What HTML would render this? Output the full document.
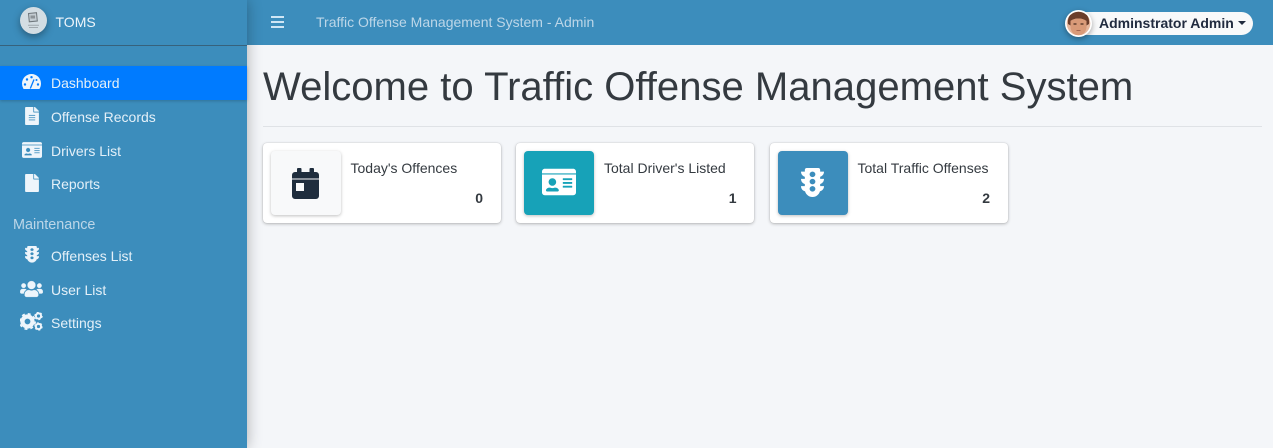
<!DOCTYPE html>
<html lang="en"><head><meta charset="utf-8"><title>TOMS</title>
<style>
*{box-sizing:border-box}
html,body{margin:0;padding:0}
body{width:1273px;height:448px;overflow:hidden;position:relative;background:#f4f6f9;font-family:"Liberation Sans",sans-serif;font-size:14px;color:#343a40}
.a{position:absolute;white-space:nowrap}
#top{left:247px;top:0;width:1026px;height:45px;background:#3c8dbc}
#side{left:0;top:0;width:247px;height:448px;background:#3c8dbc;box-shadow:0 0 14px rgba(0,0,0,.3)}
#line{left:0;top:45px;width:247px;height:1px;background:#37627c}
#active{left:0;top:66px;width:247px;height:34px;background:#007bff;box-shadow:0 1px 3px rgba(0,0,0,.2)}
.nav{left:51px;color:#e4f0f8;line-height:20px;font-size:14px}
.ic{position:absolute;fill:#eef5fb;stroke:#eef5fb;stroke-width:9}
.card{position:absolute;top:143px;width:238px;height:80px;background:#fff;border-radius:4px;box-shadow:0 0 1px rgba(0,0,0,.2),0 1px 3px rgba(0,0,0,.25)}
.box{position:absolute;left:8px;top:8px;width:70px;height:64px;border-radius:4px;box-shadow:0 1px 3px rgba(0,0,0,.25)}
.lbl{position:absolute;left:87.5px;top:15px;line-height:20px;color:#343a40;white-space:nowrap}
.num{position:absolute;right:18px;top:45px;line-height:20px;font-weight:700;color:#343a40}
</style></head><body>
<div class="a" id="top"></div>
<div class="a" id="side"></div>
<div class="a" id="line"></div>

<div class="a" style="left:20px;top:7px;width:27px;height:27px;border-radius:50%;background:#d3dde3;box-shadow:0 3px 8px rgba(0,0,0,.35)"></div>
<svg class="a" style="left:20px;top:7px" width="27" height="27" viewBox="0 0 27 27"><path d="M8.500 6.500l8-.8.800 8.300-8 .8z" fill="#c3ccd2" stroke="#6f777c" stroke-width="1"/><path d="M10.500 8.500h4.500v3h-4.500z" fill="#8b9297"/><path d="M8 17.800h11v1H8zM9 20h9v1H9z" fill="#a0a8ad"/></svg>
<div class="a" style="left:55.500px;top:12px;line-height:20px;color:#eef5fb;font-size:14px">TOMS</div>

<div class="a" id="active"></div>
<svg class="a" style="left:21px;top:73px" width="21" height="17" viewBox="0 0 21 17"><path d="M10.500 1a9.500 9.500 0 0 1 9.500 9.500c0 1.900-.5 3.700-1.400 5.200a.7.700 0 0 1-.6.300H3a.7.700 0 0 1-.6-.3A9.500 9.500 0 0 1 1 10.500 9.500 9.500 0 0 1 10.500 1z" fill="#eef5fb"/><g fill="#007bff"><circle cx="4" cy="11.500" r="1.200"/><circle cx="6" cy="6.500" r="1.200"/><circle cx="10.500" cy="4.200" r="1.200"/><circle cx="17" cy="11.500" r="1.200"/><circle cx="15.500" cy="7" r="1"/></g><path d="M9.300 15.500L13 6.500" stroke="#007bff" stroke-width="1.300" fill="none"/></svg>
<div class="a nav" style="top:73px">Dashboard</div>

<svg class="ic" style="left:24.500px;top:107px" width="14" height="18" viewBox="0 0 384 512"><path d="M224 136V0H24C11 0 0 11 0 24v464c0 13 11 24 24 24h336c13 0 24-11 24-24V160H248c-13 0-24-11-24-24zm64 236c0 7-5 12-12 12H108c-7 0-12-5-12-12v-8c0-7 5-12 12-12h168c7 0 12 5 12 12v8zm0-64c0 7-5 12-12 12H108c-7 0-12-5-12-12v-8c0-7 5-12 12-12h168c7 0 12 5 12 12v8zm0-72v8c0 7-5 12-12 12H108c-7 0-12-5-12-12v-8c0-7 5-12 12-12h168c7 0 12 5 12 12zm96-114v6H256V0h6c6 0 12 3 17 7l98 98c4 4 7 10 7 17z"/></svg>
<div class="a nav" style="top:107px">Offense Records</div>

<svg class="ic" style="left:21.500px;top:141px" width="20" height="18" viewBox="0 0 576 512"><path d="M528 32H48C21 32 0 53 0 80v16h576V80c0-27-21-48-48-48zM0 432c0 27 21 48 48 48h480c27 0 48-21 48-48V128H0v304zm352-232c0-4 4-8 8-8h144c4 0 8 4 8 8v16c0 4-4 8-8 8H360c-4 0-8-4-8-8v-16zm0 64c0-4 4-8 8-8h144c4 0 8 4 8 8v16c0 4-4 8-8 8H360c-4 0-8-4-8-8v-16zm0 64c0-4 4-8 8-8h144c4 0 8 4 8 8v16c0 4-4 8-8 8H360c-4 0-8-4-8-8v-16zM176 192c35 0 64 29 64 64s-29 64-64 64-64-29-64-64 29-64 64-64zM67 392c8-26 33-40 61-40h8c15 6 28 8 40 8s25-2 40-8h8c28 0 53 14 61 40 3 10-5 24-16 24H83c-11 0-19-14-16-24z"/></svg>
<div class="a nav" style="top:141px">Drivers List</div>

<svg class="ic" style="left:24.500px;top:174px" width="14" height="18" viewBox="0 0 384 512"><path d="M224 136V0H24C11 0 0 11 0 24v464c0 13 11 24 24 24h336c13 0 24-11 24-24V160H248c-13 0-24-11-24-24zm160-14v6H256V0h6c6 0 12 3 17 7l98 98c4 4 7 10 7 17z"/></svg>
<div class="a nav" style="top:174px">Reports</div>

<div class="a" style="left:13px;top:215px;line-height:20px;color:#bcd6e8;font-size:14.400px">Maintenance</div>

<svg class="ic" style="left:24.500px;top:246px" width="14" height="16.500" viewBox="0 0 384 512" preserveAspectRatio="none"><path d="M384 192h-64v-37c38-13 64-45 64-91h-64V32c0-18-14-32-32-32H96C78 0 64 14 64 32v32H0c0 46 26 78 64 91v37H0c0 46 26 78 64 91v37H0c0 47 28 80 68 92 14 56 65 100 124 100s110-44 124-100c40-12 68-45 68-92h-64v-37c38-13 64-45 64-91zM192 416c-26 0-48-22-48-48s22-48 48-48 48 22 48 48-22 48-48 48zm0-128c-26 0-48-22-48-48s22-48 48-48 48 22 48 48-22 48-48 48zm0-128c-26 0-48-22-48-48s22-48 48-48 48 22 48 48-22 48-48 48z"/></svg>
<div class="a nav" style="top:246px">Offenses List</div>

<svg class="ic" style="left:20px;top:280px" width="23" height="18" viewBox="0 0 640 512"><path d="M96 224c35 0 64-29 64-64s-29-64-64-64-64 29-64 64 29 64 64 64zm448 0c35 0 64-29 64-64s-29-64-64-64-64 29-64 64 29 64 64 64zm32 32h-64c-18 0-34 7-45 19 40 22 69 62 75 109h66c18 0 32-14 32-32v-32c0-35-29-64-64-64zm-256 0c62 0 112-50 112-112S382 32 320 32 208 82 208 144s50 112 112 112zm77 32h-8c-21 10-44 16-69 16s-48-6-69-16h-8c-64 0-115 52-115 115v29c0 26 22 48 48 48h288c26 0 48-22 48-48v-29c0-63-51-115-115-115zm-224-13c-11-12-27-19-45-19H64c-35 0-64 29-64 64v32c0 18 14 32 32 32h66c6-47 35-87 75-109z"/></svg>
<div class="a nav" style="top:280px">User List</div>

<svg class="a" style="left:20px;top:312px" width="23" height="19" viewBox="0 0 23 19" fill="none" stroke="#eef5fb"><circle cx="7.500" cy="9.500" r="5" stroke-width="4.200"/><circle cx="7.500" cy="9.500" r="7.700" stroke-width="1.600" stroke-dasharray="3 3.050"/><circle cx="18.500" cy="4" r="2.600" stroke-width="2"/><circle cx="18.500" cy="4" r="3.700" stroke-width="1" stroke-dasharray="2 1.870"/><circle cx="18.500" cy="14.500" r="2.600" stroke-width="2"/><circle cx="18.500" cy="14.500" r="3.700" stroke-width="1" stroke-dasharray="2 1.870"/></svg>
<div class="a nav" style="top:313px">Settings</div>

<div class="a" style="left:271px;top:16px;width:13px;height:2px;background:#cfe6f5"></div>
<div class="a" style="left:271px;top:21px;width:13px;height:2px;background:#cfe6f5"></div>
<div class="a" style="left:271px;top:26px;width:13px;height:2px;background:#cfe6f5"></div>
<div class="a" style="left:316px;top:12px;line-height:20px;color:#bcd6e8;font-size:14px">Traffic Offense Management System - Admin</div>

<div class="a" style="left:1075px;top:12px;width:178px;height:23px;border-radius:12px;background:#f8f9fa"></div>
<svg class="a" style="left:1065px;top:10px;filter:drop-shadow(0 2px 3px rgba(0,0,0,.35))" width="27" height="27" viewBox="0 0 27 27"><defs><clipPath id="c"><circle cx="13.500" cy="13.500" r="11.800"/></clipPath></defs><circle cx="13.500" cy="13.500" r="13.500" fill="#fff"/><g clip-path="url(#c)"><rect width="27" height="27" fill="#e6b79d"/><path d="M3 14C2 6 7 1 13.500 1S25 6 24 14l-2.500 1.500V11c-3-2-6-2.500-8-2.500S8 9 5.500 11v4.500z" fill="#6a3d2b"/><path d="M5.500 11c2.500-2 5.500-2.500 8-2.500s5 .5 8 2.500v6c0 4.500-4 9-8 9s-8-4.500-8-9z" fill="#d99a78"/><path d="M8.500 14h3M15.500 14h3" stroke="#4a2c20" stroke-width="1.300"/><path d="M11.500 20.500h4" stroke="#a5644e" stroke-width="1"/></g></svg>
<div class="a" style="left:1099px;top:13px;line-height:20px;font-weight:700;color:#212b3f;font-size:14px">Adminstrator Admin</div>
<div class="a" style="left:1238px;top:21px;width:0;height:0;border-left:4px solid transparent;border-right:4px solid transparent;border-top:4px solid #212b3f"></div>

<div class="a" style="left:263px;top:63px;font-size:40.050px;line-height:48px;color:#343a40">Welcome to Traffic Offense Management System</div>
<div class="a" style="left:263px;top:126px;width:999px;height:1px;background:#dfe2e6"></div>

<div class="card" style="left:263px">
  <div class="box" style="background:#f8f9fa"></div>
  <svg style="position:absolute;left:29px;top:24.500px" width="27" height="31" viewBox="0 0 27 31" fill="#1f2d3d"><path d="M6 0h2.500a1 1 0 0 1 1 1v3h8V1a1 1 0 0 1 1-1H21a1 1 0 0 1 1 1v3h2a3 3 0 0 1 3 3v3.500H0V7a3 3 0 0 1 3-3h2V1a1 1 0 0 1 1-1z"/><path fill-rule="evenodd" d="M0 11.500h27V28a3 3 0 0 1-3 3H3a3 3 0 0 1-3-3zM4 15v8h8v-8z"/></svg>
  <div class="lbl">Today's Offences</div>
  <div class="num">0</div>
</div>

<div class="card" style="left:516px">
  <div class="box" style="background:#17a2b8"></div>
  <svg style="position:absolute;left:26px;top:22px" width="34" height="34" viewBox="0 0 576 512" fill="#fff"><path d="M528 32H48C21 32 0 53 0 80v30h576V80c0-27-21-48-48-48zM0 432c0 27 21 48 48 48h480c27 0 48-21 48-48V128H0v304zm352-232c0-4 4-8 8-8h144c4 0 8 4 8 8v16c0 4-4 8-8 8H360c-4 0-8-4-8-8v-16zm0 64c0-4 4-8 8-8h144c4 0 8 4 8 8v16c0 4-4 8-8 8H360c-4 0-8-4-8-8v-16zm0 64c0-4 4-8 8-8h144c4 0 8 4 8 8v16c0 4-4 8-8 8H360c-4 0-8-4-8-8v-16zM176 192c35 0 64 29 64 64s-29 64-64 64-64-29-64-64 29-64 64-64zM67 392c8-26 33-40 61-40h8c15 6 28 8 40 8s25-2 40-8h8c28 0 53 14 61 40 3 10-5 24-16 24H83c-11 0-19-14-16-24z"/></svg>
  <div class="lbl" style="left:88px">Total Driver's Listed</div>
  <div class="num" style="right:17.500px">1</div>
</div>

<div class="card" style="left:770px">
  <div class="box" style="background:#3c8dbc"></div>
  <svg style="position:absolute;left:31px;top:25px" width="23" height="29" viewBox="0 0 384 512" preserveAspectRatio="none" fill="#fff"><path d="M384 192h-64v-37c38-13 64-45 64-91h-64V32c0-18-14-32-32-32H96C78 0 64 14 64 32v32H0c0 46 26 78 64 91v37H0c0 46 26 78 64 91v37H0c0 47 28 80 68 92 14 56 65 100 124 100s110-44 124-100c40-12 68-45 68-92h-64v-37c38-13 64-45 64-91zM192 416c-26 0-48-22-48-48s22-48 48-48 48 22 48 48-22 48-48 48zm0-128c-26 0-48-22-48-48s22-48 48-48 48 22 48 48-22 48-48 48zm0-128c-26 0-48-22-48-48s22-48 48-48 48 22 48 48-22 48-48 48z"/></svg>
  <div class="lbl">Total Traffic Offenses</div>
  <div class="num">2</div>
</div>
</body></html>
